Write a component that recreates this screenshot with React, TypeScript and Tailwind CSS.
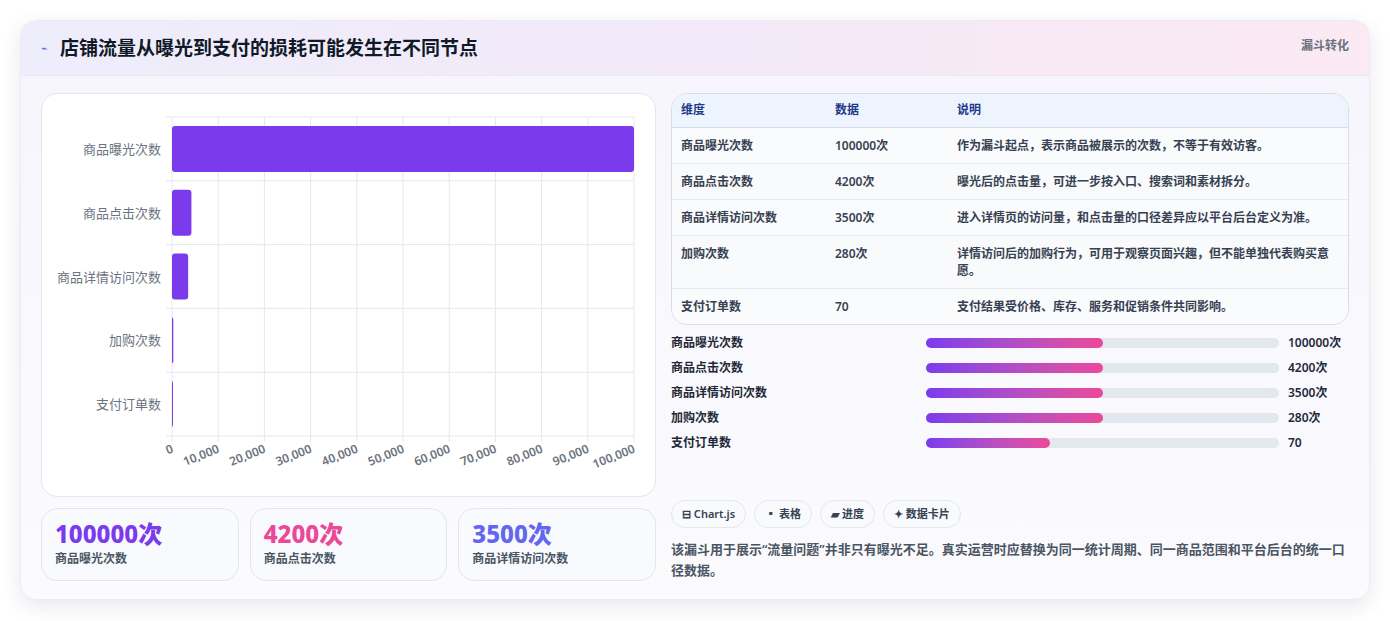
import React from "react";

const rows = [
  { name: "商品曝光次数", v: 100000, unit: "次", note: "作为漏斗起点，表示商品被展示的次数，不等于有效访客。" },
  { name: "商品点击次数", v: 4200, unit: "次", note: "曝光后的点击量，可进一步按入口、搜索词和素材拆分。" },
  { name: "商品详情访问次数", v: 3500, unit: "次", note: "进入详情页的访问量，和点击量的口径差异应以平台后台定义为准。" },
  { name: "加购次数", v: 280, unit: "次", note: "详情访问后的加购行为，可用于观察页面兴趣，但不能单独代表购买意愿。" },
  { name: "支付订单数", v: 70, unit: "", note: "支付结果受价格、库存、服务和促销条件共同影响。" },
];

const progress = [50, 50, 50, 50, 35];

const Chart = () => {
  const L = 130, R = 592, T = 23, B = 342;
  const W = R - L;
  const rowH = (B - T) / 5;
  const ticks = Array.from({ length: 11 }, (_, i) => i * 10000);
  return (
    <svg width="613" height="400" viewBox="0 0 613 400" className="block">
      {ticks.map((t, i) => {
        const x = L + (W * i) / 10;
        return <line key={t} x1={x} x2={x} y1={T} y2={B + 6} stroke="#e5e7eb" />;
      })}
      {Array.from({ length: 6 }, (_, i) => (
        <line key={i} x1={L - 6} x2={R} y1={T + rowH * i} y2={T + rowH * i} stroke="#e5e7eb" />
      ))}
      {rows.map((r, i) => {
        const cy = T + rowH * i + rowH / 2;
        const w = Math.max((W * r.v) / 100000, 1);
        return (
          <g key={r.name}>
            <rect x={L} y={cy - 23} width={w} height={46} rx={3} fill="#7c3aed" />
            <text x={L - 11} y={cy + 5} textAnchor="end" fontSize="13" fill="#6b7280">
              {r.name}
            </text>
          </g>
        );
      })}
      {ticks.map((t, i) => {
        const x = L + (W * i) / 10;
        return (
          <text
            key={t}
            x={x + 2}
            y={B + 16}
            textAnchor="end"
            fontSize="12"
            fontWeight="600"
            fill="#6b7280"
            transform={`rotate(-22 ${x + 2} ${B + 16})`}
          >
            {t.toLocaleString("en-US")}
          </text>
        );
      })}
    </svg>
  );
};

export default function App() {
  return (
    <div
      className="min-h-[621px] bg-white px-5 pt-5 text-[#1f2937]"
      style={{ fontFamily: '"Noto Sans", "Noto Sans CJK SC", sans-serif' }}
    >
      <div className="overflow-hidden rounded-2xl border border-[#eceaf5] bg-gradient-to-b from-[#f6f5fd] to-[#fbfbfe] shadow-[0_6px_20px_rgba(30,30,80,0.10)]">
        <div className="flex h-[55px] items-start justify-between bg-gradient-to-r from-[#eeedfb] via-[#f3e9f8] to-[#fbe9f3] px-5 border-b border-[#ebe7f5]">
          <div className="mt-[15px] flex items-center gap-3">
            <span className="text-[11px] text-[#4f6bd8]">⌁</span>
            <h1 className="text-[19px] font-bold leading-6 text-[#111827]">店铺流量从曝光到支付的损耗可能发生在不同节点</h1>
          </div>
          <span className="mt-[16px] text-[12px] font-semibold text-[#6b7280]">漏斗转化</span>
        </div>

        <div className="flex gap-[15px] px-5 pb-[18px] pt-[17px]">
          <div className="flex w-[615px] flex-col gap-[11px]">
            <div className="h-[404px] rounded-2xl border border-[#e3e5ef] bg-white">
              <Chart />
            </div>
            <div className="grid grid-cols-3 gap-[11px]">
              {[
                { v: "100000次", c: "text-[#7c3aed]", l: "商品曝光次数" },
                { v: "4200次", c: "text-[#ec4899]", l: "商品点击次数" },
                { v: "3500次", c: "text-[#6366f1]", l: "商品详情访问次数" },
              ].map((k) => (
                <div key={k.l} className="h-[73px] rounded-2xl border border-[#dfe6f2] bg-[#f8fafd] px-[13px] pt-[9px]">
                  <div className={`text-[24px] font-extrabold leading-8 ${k.c}`}>{k.v}</div>
                  <div className="text-[12px] font-semibold text-[#4b5563]">{k.l}</div>
                </div>
              ))}
            </div>
          </div>

          <div className="flex flex-1 flex-col">
            <div className="overflow-hidden rounded-2xl border border-[#d6dceb] bg-white">
              <table className="w-full text-left text-[12px] font-semibold">
                <thead>
                  <tr className="h-[33px] bg-[#eef4fd] text-[#1e3a8a] border-b border-[#d6dceb]">
                    <th className="w-[163px] pl-[9px] font-semibold">维度</th>
                    <th className="w-[122px] font-semibold">数据</th>
                    <th className="font-semibold">说明</th>
                  </tr>
                </thead>
                <tbody className="text-[#374151]">
                  {rows.map((r, i) => (
                    <tr key={r.name} className={`border-t border-[#e5e9f1] ${i % 2 ? "bg-[#f9fafc]" : "bg-[#fafbfd]"}`}>
                      <td className="py-[9px] pl-[9px] align-top leading-[17px]">{r.name}</td>
                      <td className="py-[9px] align-top leading-[17px]">{r.v}{r.unit}</td>
                      <td className="py-[9px] pr-4 align-top leading-[17px]">{r.note}</td>
                    </tr>
                  ))}
                </tbody>
              </table>
            </div>

            <div className="mt-[9px] flex flex-col gap-[7px]">
              {rows.map((r, i) => (
                <div key={r.name} className="flex h-[18px] items-center text-[12px] font-semibold text-[#1f2937]">
                  <span className="w-[255px]">{r.name}</span>
                  <div className="h-[10px] w-[353px] rounded-full bg-[#e3e7ee]">
                    <div
                      className="h-full rounded-full bg-gradient-to-r from-[#7c3aed] to-[#ec4899]"
                      style={{ width: `${progress[i]}%` }}
                    />
                  </div>
                  <span className="ml-[9px]">{r.v}{r.unit}</span>
                </div>
              ))}
            </div>

            <div className="mt-auto flex gap-[8px]">
              {["⊟ Chart.js", "▪ 表格", "▰ 进度", "✦ 数据卡片"].map((c) => (
                <span key={c} className="rounded-full border border-[#e2e6ee] bg-[#f8fafc] px-[10px] py-[5px] text-[11px] font-semibold text-[#374151]">
                  {c}
                </span>
              ))}
            </div>
            <p className="mt-[11px] text-[13px] font-semibold leading-[21px] text-[#4b5563]">
              该漏斗用于展示“流量问题”并非只有曝光不足。真实运营时应替换为同一统计周期、同一商品范围和平台后台的统一口径数据。
            </p>
          </div>
        </div>
      </div>
    </div>
  );
}
